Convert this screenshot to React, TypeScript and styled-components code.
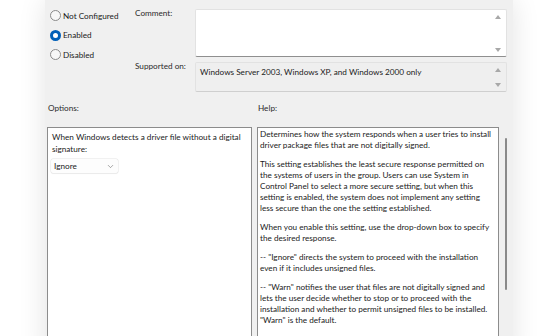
import styled, { createGlobalStyle } from 'styled-components';
import { ChevronDown } from 'lucide-react';

// --- Dados ---
const radioOptions = [
  { label: 'Not Configured', checked: false },
  { label: 'Enabled', checked: true },
  { label: 'Disabled', checked: false },
];

const helpParagraphs = [
  [
    'Determines how the system responds when a user tries to install',
    'driver package files that are not digitally signed.',
  ],
  [
    'This setting establishes the least secure response permitted on',
    'the systems of users in the group. Users can use System in',
    'Control Panel to select a more secure setting, but when this',
    'setting is enabled, the system does not implement any setting',
    'less secure than the one the setting established.',
  ],
  [
    'When you enable this setting, use the drop-down box to specify',
    'the desired response.',
  ],
  [
    '--   "Ignore" directs the system to proceed with the installation',
    'even if it includes unsigned files.',
  ],
  [
    '--   "Warn" notifies the user that files are not digitally signed and',
    'lets the user decide whether to stop or to proceed with the',
    'installation and whether to permit unsigned files to be installed.',
    '"Warn" is the default.',
  ],
];

// --- Estilos ---
const GlobalStyle = createGlobalStyle`
  html, body {
    margin: 0;
    padding: 0;
    background: #ffffff;
  }
  body {
    font-family: Lato, "Liberation Sans", sans-serif;
    font-size: 8.2px;
    color: #1b1b1b;
  }
`;

const Page = styled.div`
  width: 560px;
  height: 336px;
  overflow: hidden;
  background: #ffffff;
`;

const Dialog = styled.div`
  margin-left: 45px;
  width: 468px;
  height: 360px;
  background: #f0f0f0;
  box-shadow: 0 0 26px rgba(0, 0, 0, 0.11);
  display: flex;
  flex-direction: column;
  box-sizing: border-box;
  padding-top: 9px;
`;

const TopSection = styled.div`
  display: flex;
`;

const RadioGroup = styled.div`
  width: 90px;
  padding-left: 5px;
  box-sizing: border-box;
  display: flex;
  flex-direction: column;
  margin-top: -3px;
`;

const RadioRow = styled.div`
  height: 19.5px;
  display: flex;
  align-items: center;
  gap: 2px;
  line-height: 12px;
`;

const RadioCircle = styled.span<{ $checked: boolean }>`
  width: 11px;
  height: 11px;
  border-radius: 50%;
  box-sizing: border-box;
  flex-shrink: 0;
  background: ${({ $checked }) => ($checked ? '#ffffff' : '#f7f7f7')};
  border: ${({ $checked }) => ($checked ? '3px solid #005fb8' : '1px solid #8a8a8a')};
`;

const FieldGrid = styled.div`
  display: grid;
  grid-template-columns: 60px 312px;
  row-gap: 5px;
`;

const FieldLabel = styled.div`
  line-height: 12px;
  margin-top: -2px;
  color: #2b2b2b;
`;

const TextBox = styled.div<{ $height: number; $readOnly?: boolean }>`
  position: relative;
  height: ${({ $height }) => $height}px;
  box-sizing: border-box;
  background: ${({ $readOnly }) => ($readOnly ? '#efefef' : '#ffffff')};
  border: 1px solid #e2e2e2;
  border-bottom: 1px solid ${({ $readOnly }) => ($readOnly ? '#cfcfcf' : '#8f8f8f')};
  border-radius: 2px;
  padding: 3px 22px 0 4px;
  line-height: 12px;
`;

const ScrollArrow = styled.span<{ $dir: 'up' | 'down' }>`
  position: absolute;
  right: 5px;
  width: 0;
  height: 0;
  border-left: 3px solid transparent;
  border-right: 3px solid transparent;
  ${({ $dir }) =>
    $dir === 'up'
      ? 'top: 5px; border-bottom: 4px solid #a8a8a8;'
      : 'bottom: 4px; border-top: 4px solid #a8a8a8;'}
`;

const PaneLabels = styled.div`
  display: flex;
  margin-top: 10px;
  line-height: 12px;
  color: #2b2b2b;
`;

const PaneLabel = styled.div<{ $width: number }>`
  width: ${({ $width }) => $width}px;
  padding-left: 3px;
  box-sizing: border-box;
`;

const Panes = styled.div`
  display: flex;
  margin-top: 13px;
  padding-left: 2px;
  flex: 1;
`;

const OptionsPane = styled.div`
  width: 205px;
  box-sizing: border-box;
  background: #ffffff;
  border: 1px solid #8c8c8c;
  border-bottom: none;
  padding: 4px 4px;
  line-height: 11.7px;
`;

const OptionsText = styled.div`
  margin-bottom: 4px;
`;

const Dropdown = styled.div`
  width: 67px;
  height: 14px;
  margin-left: -1px;
  box-sizing: border-box;
  background: #fdfdfd;
  border-radius: 2px;
  box-shadow: 0 0 0 0.5px #e3e3e3, 0 1px 1px rgba(0, 0, 0, 0.06);
  display: flex;
  align-items: center;
  justify-content: space-between;
  padding: 0 3px 0 3px;
  color: #1b1b1b;
`;

const HelpPane = styled.div`
  margin-left: 5px;
  width: 242px;
  box-sizing: border-box;
  background: #ffffff;
  border: 1px solid #8c8c8c;
  border-bottom: none;
  padding: 1px 2px;
  line-height: 11px;
  white-space: nowrap;
  overflow: hidden;
`;

const HelpParagraph = styled.p`
  margin: 0 0 8px 0;
`;

const HelpLine = styled.span`
  display: block;
`;

const ScrollTrack = styled.div`
  width: 14px;
  display: flex;
  justify-content: center;
  padding-top: 11px;
  box-sizing: border-box;
`;

const ScrollThumb = styled.div`
  width: 2px;
  height: 152px;
  border-radius: 1px;
  background: #8a8a8a;
`;

// --- Componente ---
export default function App() {
  return (
    <>
      <GlobalStyle />
      <Page>
        <Dialog>
          <TopSection>
            <RadioGroup>
              {radioOptions.map((opt) => (
                <RadioRow key={opt.label}>
                  <RadioCircle $checked={opt.checked} />
                  <span>{opt.label}</span>
                </RadioRow>
              ))}
            </RadioGroup>
            <FieldGrid>
              <FieldLabel>Comment:</FieldLabel>
              <TextBox $height={48}>
                <ScrollArrow $dir="up" />
                <ScrollArrow $dir="down" />
              </TextBox>
              <FieldLabel>Supported on:</FieldLabel>
              <TextBox $height={30} $readOnly>
                Windows Server 2003, Windows XP, and Windows 2000 only
                <ScrollArrow $dir="up" />
                <ScrollArrow $dir="down" />
              </TextBox>
            </FieldGrid>
          </TopSection>

          <PaneLabels>
            <PaneLabel $width={210}>Options:</PaneLabel>
            <PaneLabel $width={240}>Help:</PaneLabel>
          </PaneLabels>

          <Panes>
            <OptionsPane>
              <OptionsText>
                When Windows detects a driver file without a digital
                <br />
                signature:
              </OptionsText>
              <Dropdown>
                <span>Ignore</span>
                <ChevronDown size={9} strokeWidth={1.4} color="#5a5a5a" />
              </Dropdown>
            </OptionsPane>
            <HelpPane>
              {helpParagraphs.map((para, i) => (
                <HelpParagraph key={i}>
                  {para.map((line) => (
                    <HelpLine key={line}>{line}</HelpLine>
                  ))}
                </HelpParagraph>
              ))}
            </HelpPane>
            <ScrollTrack>
              <ScrollThumb />
            </ScrollTrack>
          </Panes>
        </Dialog>
      </Page>
    </>
  );
}
